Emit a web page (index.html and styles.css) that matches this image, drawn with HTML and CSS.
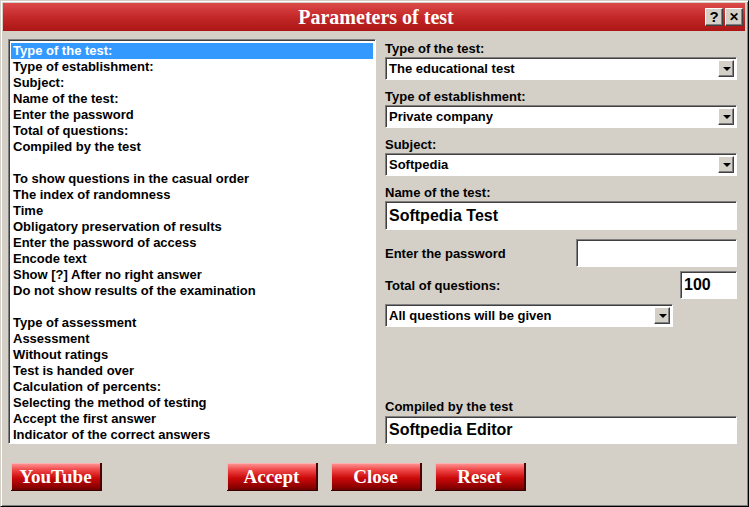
FILE: index.html
```html
<!DOCTYPE html>
<html lang="en">
<head>
  <meta charset="UTF-8" />
  <title>Parameters of test</title>
  <link rel="stylesheet" href="styles.css">
</head>
<body>

  <div class="window">
    <!-- Title bar -->
    <div class="titlebar">
      <span class="title">Parameters of test</span>
      <div class="caption-buttons">
        <span class="cap-btn">?</span>
        <span class="cap-btn cap-close">&#x2715;</span>
      </div>
    </div>

    <div class="content">
      <!-- Left: parameter list -->
      <ul class="param-list">
        <li class="selected">Type of the test:</li>
        <li>Type of establishment:</li>
        <li>Subject:</li>
        <li>Name of the test:</li>
        <li>Enter the password</li>
        <li>Total of questions:</li>
        <li>Compiled by the test</li>
        <li class="blank"></li>
        <li>To show questions in the casual order</li>
        <li>The index of randomness</li>
        <li>Time</li>
        <li>Obligatory preservation of results</li>
        <li>Enter the password of access</li>
        <li>Encode text</li>
        <li>Show [?] After no right answer</li>
        <li>Do not show results of the examination</li>
        <li class="blank"></li>
        <li>Type of assessment</li>
        <li>Assessment</li>
        <li>Without ratings</li>
        <li>Test is handed over</li>
        <li>Calculation of percents:</li>
        <li>Selecting the method of testing</li>
        <li>Accept the first answer</li>
        <li>Indicator of the correct answers</li>
      </ul>

      <!-- Right: editors -->
      <div class="editors">
        <div class="field">
          <label>Type of the test:</label>
          <div class="combo"><span>The educational test</span><i class="drop"></i></div>
        </div>
        <div class="field">
          <label>Type of establishment:</label>
          <div class="combo"><span>Private company</span><i class="drop"></i></div>
        </div>
        <div class="field">
          <label>Subject:</label>
          <div class="combo"><span>Softpedia</span><i class="drop"></i></div>
        </div>
        <div class="field">
          <label>Name of the test:</label>
          <div class="edit big">Softpedia Test</div>
        </div>
        <div class="row password-row">
          <label>Enter the password</label>
          <div class="edit pass"></div>
        </div>
        <div class="row total-row">
          <label>Total of questions:</label>
          <div class="edit big count">100</div>
        </div>
        <div class="combo short"><span>All questions will be given</span><i class="drop"></i></div>

        <div class="field compiled">
          <label>Compiled by the test</label>
          <div class="edit big">Softpedia Editor</div>
        </div>
      </div>
    </div>

    <!-- Bottom buttons -->
    <div class="buttons">
      <span class="red-btn">YouTube</span>
      <div class="main-buttons">
        <span class="red-btn">Accept</span>
        <span class="red-btn">Close</span>
        <span class="red-btn">Reset</span>
      </div>
    </div>
  </div>

</body>
</html>
```

FILE: styles.css
```css
* {
  box-sizing: border-box;
}

body {
  margin: 0;
  background-color: #d4d0c8;
  font-family: 'Liberation Sans', Arial, sans-serif;
  color: #000;
}

/* WINDOW FRAME */
.window {
  width: 749px;
  height: 507px;
  background-color: #d4d0c8;
  border-top: 1px solid #d4d0c8;
  border-left: 1px solid #d4d0c8;
  border-right: 1px solid #000;
  border-bottom: 1px solid #000;
  box-shadow: inset 1px 1px 0 #fff, inset -1px -1px 0 #808080;
  padding: 2px 3px 3px 2px;
  display: flex;
  flex-direction: column;
}

.titlebar {
  height: 28px;
  background: linear-gradient(to bottom, #dc4a4a, #c42828 50%, #ac1616);
  display: flex;
  align-items: center;
  justify-content: center;
  position: relative;
}

.title {
  font-family: 'Liberation Serif', 'Times New Roman', serif;
  font-weight: bold;
  font-size: 20px;
  color: #fff;
  margin-left: 4px;
}

.caption-buttons {
  position: absolute;
  right: 2px;
  top: 5px;
  display: flex;
  gap: 2px;
}

.cap-btn {
  width: 18px;
  height: 18px;
  background-color: #d4d0c8;
  border: 1px solid;
  border-color: #fff #404040 #404040 #fff;
  box-shadow: inset -1px -1px 0 #808080;
  font-size: 15px;
  font-weight: bold;
  line-height: 16px;
  text-align: center;
}

.cap-close {
  font-size: 12px;
}

/* CONTENT */
.content {
  display: flex;
  padding: 8px 8px 0 5px;
  gap: 9px;
}

.param-list {
  list-style: none;
  margin: 0;
  padding: 3px 2px 1px;
  width: 368px;
  height: 405px;
  background-color: #fff;
  border: 1px solid;
  border-color: #808080 #fff #fff #808080;
  box-shadow: inset 1px 1px 0 #404040;
  font-size: 13px;
  font-weight: bold;
  overflow: hidden;
}

.param-list li {
  height: 16px;
  line-height: 16px;
  padding-left: 2px;
  white-space: nowrap;
}

.param-list li.selected {
  background-color: #3399ff;
  color: #fff;
}

/* RIGHT EDITORS */
.editors {
  flex: 1;
  display: flex;
  flex-direction: column;
  padding-top: 2px;
  font-size: 13px;
  font-weight: bold;
}

.field {
  display: flex;
  flex-direction: column;
  margin-bottom: 9px;
}

.field label {
  height: 15px;
  line-height: 15px;
  margin-bottom: 1px;
}

.combo {
  height: 23px;
  background-color: #fff;
  border: 1px solid;
  border-color: #808080 #fff #fff #808080;
  box-shadow: inset 1px 1px 0 #404040;
  display: flex;
  align-items: center;
  justify-content: space-between;
  padding: 0 2px 0 3px;
}

.combo span {
  font-weight: bold;
  font-size: 13px;
}

.drop {
  width: 16px;
  height: 17px;
  background-color: #d4d0c8;
  border: 1px solid;
  border-color: #fff #404040 #404040 #fff;
  box-shadow: inset -1px -1px 0 #808080;
  position: relative;
}

.drop::after {
  content: "";
  position: absolute;
  left: 4px;
  top: 6px;
  border-left: 4px solid transparent;
  border-right: 4px solid transparent;
  border-top: 4px solid #000;
}

.edit {
  height: 29px;
  background-color: #fff;
  border: 1px solid;
  border-color: #808080 #fff #fff #808080;
  box-shadow: inset 1px 1px 0 #404040;
  padding: 0 3px;
  display: flex;
  align-items: center;
}

.edit.big {
  font-size: 16px;
  font-weight: bold;
}

.row {
  display: flex;
  align-items: center;
  justify-content: space-between;
}

.password-row {
  margin-top: 0;
}

.password-row .pass {
  width: 161px;
  height: 28px;
}

.total-row {
  margin-top: 4px;
}

.total-row .count {
  width: 57px;
  height: 28px;
}

.combo.short {
  width: 288px;
  margin-top: 5px;
}

.compiled {
  margin-top: auto;
  margin-bottom: 0;
}

.compiled label {
  margin-bottom: 2px;
}

.compiled .edit {
  height: 28px;
}

/* BOTTOM BUTTONS */
.buttons {
  display: flex;
  align-items: center;
  padding: 19px 0 0 8px;
  gap: 125px;
}

.main-buttons {
  display: flex;
  gap: 13px;
}

.red-btn {
  width: 91px;
  height: 28px;
  background: linear-gradient(to bottom, #ff9a9a 0%, #f04848 25%, #cc0a0a 55%, #8a0000 90%, #6a0000 100%);
  border-right: 2px solid #4a0000;
  border-bottom: 1px solid #3a0000;
  box-shadow: inset 1px 1px 0 #ffb0b0;
  color: #fff;
  font-family: 'Liberation Serif', 'Times New Roman', serif;
  font-weight: bold;
  font-size: 19px;
  text-align: center;
  line-height: 27px;
}
```
